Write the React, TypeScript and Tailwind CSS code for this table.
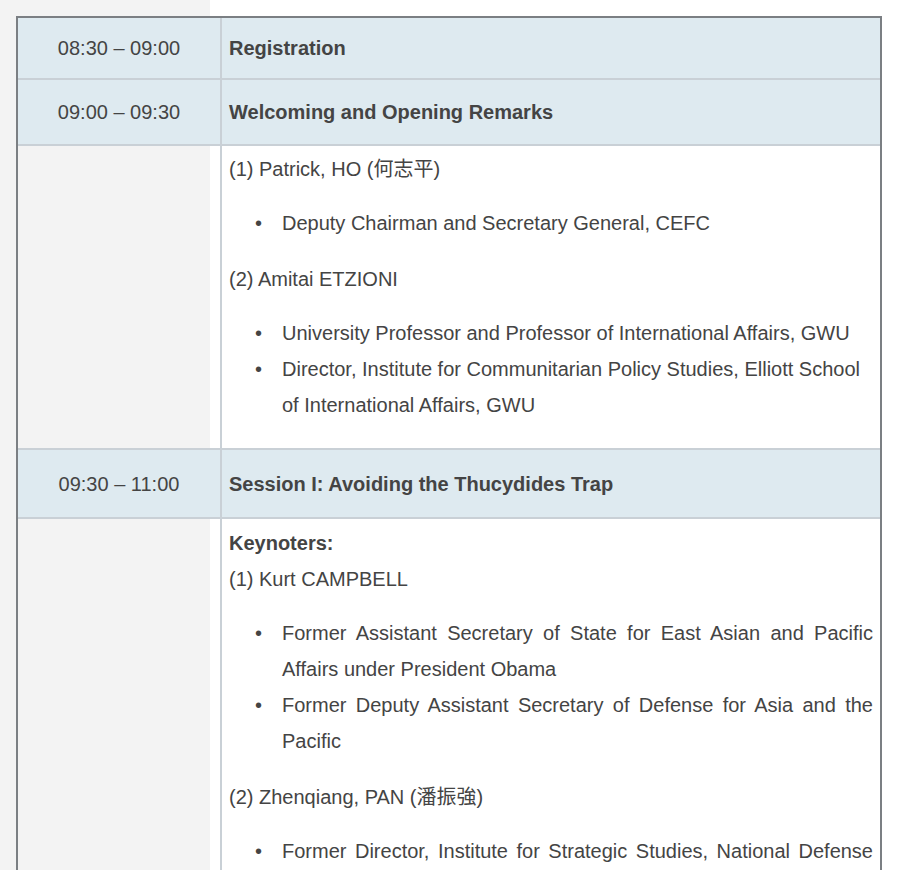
import React from "react";

const font = { fontFamily: '"Liberation Sans", Arial, "Noto Sans CJK TC", sans-serif' };

function Bullet({ children, justify }: { children: React.ReactNode; justify?: boolean }) {
  return (
    <li className="flex">
      <span className="w-[53px] shrink-0 flex justify-end pr-[20px]">•</span>
      <span className={justify ? "text-justify flex-1" : "flex-1"}>{children}</span>
    </li>
  );
}

export default function App() {
  return (
    <div
      className="min-h-[870px] pt-4 pl-4 bg-[linear-gradient(to_right,#f3f3f3_210px,#ffffff_210px)] text-[20px] leading-[36px] text-[#444444]"
      style={font}
    >
      <div className="w-[866px] border-2 border-[#7b7f83]">
        {/* Row 1 */}
        <div className="grid grid-cols-[204px_1fr] bg-[#deeaf0] border-b-2 border-[#c9d0d6] h-[62px]">
          <div className="border-r-2 border-[#c9d0d6] flex items-center justify-center">08:30 – 09:00</div>
          <div className="flex items-center px-[7px] font-bold">Registration</div>
        </div>
        {/* Row 2 */}
        <div className="grid grid-cols-[204px_1fr] bg-[#deeaf0] border-b-2 border-[#c9d0d6] h-[66px]">
          <div className="border-r-2 border-[#c9d0d6] flex items-center justify-center">09:00 – 09:30</div>
          <div className="flex items-center px-[7px] font-bold">Welcoming and Opening Remarks</div>
        </div>
        {/* Row 3 */}
        <div className="grid grid-cols-[204px_1fr] border-b-2 border-[#c9d0d6]">
          <div className="border-r-2 border-[#c9d0d6]"></div>
          <div className="px-[7px] pt-[5px] pb-[5px]">
            <p className="mb-[18px]">(1) Patrick, HO (何志平)</p>
            <ul className="mb-[20px]">
              <Bullet>Deputy Chairman and Secretary General, CEFC</Bullet>
            </ul>
            <p className="mb-[18px]">(2) Amitai ETZIONI</p>
            <ul className="mb-[20px]">
              <Bullet>University Professor and Professor of International Affairs, GWU</Bullet>
              <Bullet>Director, Institute for Communitarian Policy Studies, Elliott School of International Affairs, GWU</Bullet>
            </ul>
          </div>
        </div>
        {/* Row 4 */}
        <div className="grid grid-cols-[204px_1fr] bg-[#deeaf0] border-b-2 border-[#c9d0d6] h-[69px]">
          <div className="border-r-2 border-[#c9d0d6] flex items-center justify-center">09:30 – 11:00</div>
          <div className="flex items-center px-[7px] font-bold">Session I: Avoiding the Thucydides Trap</div>
        </div>
        {/* Row 5 */}
        <div className="grid grid-cols-[204px_1fr]">
          <div className="border-r-2 border-[#c9d0d6]"></div>
          <div className="px-[7px] pt-[6px] pb-[5px]">
            <p className="mb-[18px]">
              <strong>Keynoters:</strong>
              <br />
              (1) Kurt CAMPBELL
            </p>
            <ul className="mb-[20px]">
              <Bullet justify>Former Assistant Secretary of State for East Asian and Pacific Affairs under President Obama</Bullet>
              <Bullet justify>Former Deputy Assistant Secretary of Defense for Asia and the Pacific</Bullet>
            </ul>
            <p className="mb-[18px]">(2) Zhenqiang, PAN (潘振強)</p>
            <ul className="mb-[20px]">
              <Bullet justify>Former Director, Institute for Strategic Studies, National Defense University, PLA</Bullet>
              <Bullet justify>Senior Advisor, China Reform Forum</Bullet>
            </ul>
          </div>
        </div>
      </div>
    </div>
  );
}
